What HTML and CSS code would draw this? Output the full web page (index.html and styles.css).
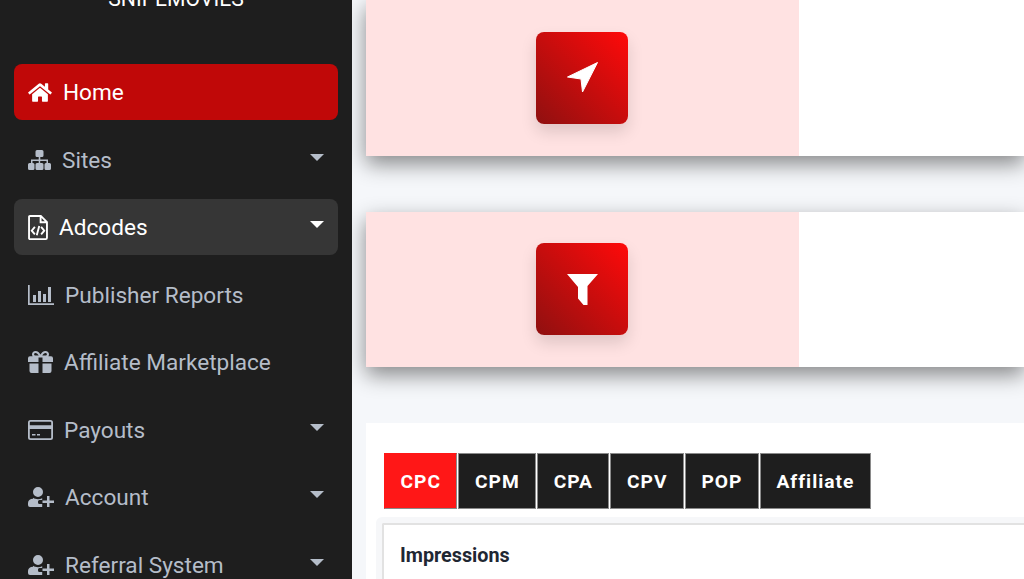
FILE: index.html
```html
<!DOCTYPE html>
<html lang="en">
<head>
    <meta charset="UTF-8">
    <meta name="viewport" content="width=device-width, initial-scale=1.0">
    <title>Snipemovies Dashboard</title>
    <link rel="stylesheet" href="styles.css">
</head>
<body>
    <div class="layout">
        <aside class="sidebar">
            <div class="brand">SNIPEMOVIES</div>
            <nav class="menu">
                <a class="menu-item active">
                    <svg class="ic ic-home" viewBox="0 0 576 512"><path fill="currentColor" d="M280.37 148.26L96 300.11V464a16 16 0 0 0 16 16l112.06-.29a16 16 0 0 0 15.92-16V368a16 16 0 0 1 16-16h64a16 16 0 0 1 16 16v95.64a16 16 0 0 0 16 16.05L464 480a16 16 0 0 0 16-16V300L295.67 148.26a12.19 12.19 0 0 0-15.3 0zM571.6 251.47L488 182.56V44.05a12 12 0 0 0-12-12h-56a12 12 0 0 0-12 12v72.61L318.47 43a48 48 0 0 0-61 0L4.34 251.47a12 12 0 0 0-1.6 16.9l25.5 31A12 12 0 0 0 45.15 301l235.22-193.74a12.19 12.19 0 0 1 15.3 0L530.9 301a12 12 0 0 0 16.9-1.6l25.5-31a12 12 0 0 0-1.7-16.93z"/></svg>
                    <span>Home</span>
                </a>
                <a class="menu-item">
                    <svg class="ic ic-sites" viewBox="0 0 23 20"><path fill="currentColor" d="M9 0h5a1.500 1.500 0 0 1 1.500 1.500v4A1.500 1.500 0 0 1 14 7h-1.700v2.500H20V13h1.500a1.500 1.500 0 0 1 1.500 1.500v4a1.500 1.500 0 0 1-1.500 1.500h-3.500a1.500 1.500 0 0 1-1.500-1.500v-4a1.500 1.500 0 0 1 1.500-1.500h.5v-2h-6.300v2H14a1.500 1.500 0 0 1 1.500 1.500v4A1.500 1.500 0 0 1 14 20H9a1.500 1.500 0 0 1-1.500-1.500v-4A1.500 1.500 0 0 1 9 13h1.700v-2H4.500v2H5a1.500 1.500 0 0 1 1.500 1.500v4A1.500 1.500 0 0 1 5 20H1.500A1.500 1.500 0 0 1 0 18.500v-4A1.500 1.500 0 0 1 1.500 13H3V9.500h7.700V7H9a1.500 1.500 0 0 1-1.500-1.500v-4A1.500 1.500 0 0 1 9 0z"/></svg>
                    <span>Sites</span>
                    <i class="caret"></i>
                </a>
                <a class="menu-item open">
                    <svg class="ic ic-code" viewBox="0 0 19 24"><path fill="none" stroke="currentColor" stroke-width="1.800" d="M1.800.9h10.400l5.900 5.900v15.100a1.200 1.200 0 0 1-1.200 1.200H1.800a.9.900 0 0 1-.9-.9V1.800a.9.900 0 0 1 .9-.9zM12 1v6h6"/><path fill="none" stroke="currentColor" stroke-width="1.800" d="M6.500 11.500l-3 3.500 3 3.500M12.500 11.500l3 3.500-3 3.500M10.700 10.500l-2.400 9"/></svg>
                    <span>Adcodes</span>
                    <i class="caret"></i>
                </a>
                <a class="menu-item">
                    <svg class="ic ic-chart" viewBox="0 0 26 20"><path fill="currentColor" d="M0 0h1.700v18.300H26V20H0zM5 10h3v7H5zM10 6h3v11h-3zM15 9h3v8h-3zM20 2h3v15h-3z"/></svg>
                    <span>Publisher Reports</span>
                </a>
                <a class="menu-item">
                    <svg class="ic ic-gift" viewBox="0 0 25 22"><path fill="currentColor" d="M7.500 0c2.300 0 3.900 1.500 5 3.600C13.600 1.500 15.200 0 17.500 0 19.500 0 21 1.500 21 3.300c0 .8-.2 1.400-.6 1.900H23a2 2 0 0 1 2 2V11H14.500V6.500h-4V11H0V7.200a2 2 0 0 1 2-2h2.600A3 3 0 0 1 4 3.300C4 1.500 5.500 0 7.500 0zm0 2C6.700 2 6.100 2.600 6.100 3.300s.6 1.300 1.400 1.300h3.200C9.800 3 8.800 2 7.500 2zm10 0c-1.300 0-2.300 1-3.200 2.600h3.200c.8 0 1.400-.6 1.400-1.300S18.300 2 17.500 2zM1.500 12.500h9V22h-7a2 2 0 0 1-2-2zm13 0h9V20a2 2 0 0 1-2 2h-7z"/></svg>
                    <span>Affiliate Marketplace</span>
                </a>
                <a class="menu-item">
                    <svg class="ic ic-card" viewBox="0 0 25 20"><path fill="currentColor" fill-rule="evenodd" d="M2.500 0h20A2.500 2.500 0 0 1 25 2.500v15a2.500 2.500 0 0 1-2.500 2.500h-20A2.500 2.500 0 0 1 0 17.500v-15A2.500 2.500 0 0 1 2.500 0zM1.800 2.500v2.800h21.400V2.500a.7.7 0 0 0-.7-.7h-20a.7.7 0 0 0-.7.7zm0 6.500v8.500c0 .4.300.7.700.7h20a.7.7 0 0 0 .7-.7V9zM4 14h3.500v1.500H4zM9 14h3v1.500H9z"/></svg>
                    <span>Payouts</span>
                    <i class="caret"></i>
                </a>
                <a class="menu-item">
                    <svg class="ic ic-user" viewBox="0 0 26 20"><path fill="currentColor" d="M10 0a5 5 0 1 1 0 10 5 5 0 0 1 0-10zM5 10.800c1.400 1 3.100 1.400 5 1.400 1.500 0 3-.4 4.200-1V13h-2.700a1.500 1.500 0 0 0-1.500 1.500v1a1.500 1.500 0 0 0 1.500 1.500h2.700v3H2a2 2 0 0 1-2-2v-2c0-2.500 2-4.200 5-4.200zM19 9h2.500v4.500H26V16h-4.500v4H19v-4h-4.500v-2.500H19z"/></svg>
                    <span>Account</span>
                    <i class="caret"></i>
                </a>
                <a class="menu-item">
                    <svg class="ic ic-user" viewBox="0 0 26 20"><path fill="currentColor" d="M10 0a5 5 0 1 1 0 10 5 5 0 0 1 0-10zM5 10.800c1.400 1 3.100 1.400 5 1.400 1.500 0 3-.4 4.200-1V13h-2.700a1.500 1.500 0 0 0-1.500 1.500v1a1.500 1.500 0 0 0 1.500 1.500h2.700v3H2a2 2 0 0 1-2-2v-2c0-2.500 2-4.200 5-4.200zM19 9h2.500v4.500H26V16h-4.500v4H19v-4h-4.500v-2.500H19z"/></svg>
                    <span>Referral System</span>
                    <i class="caret"></i>
                </a>
            </nav>
        </aside>

        <main class="main">
            <section class="stat-card">
                <div class="stat-side">
                    <div class="stat-icon">
                        <svg class="glyph" viewBox="0 0 31 31"><path fill="currentColor" stroke="currentColor" stroke-width="1" stroke-linejoin="round" d="M30.500.5L15.500 30 14 17 .5 15z"/></svg>
                    </div>
                </div>
            </section>

            <section class="stat-card">
                <div class="stat-side">
                    <div class="stat-icon">
                        <svg class="glyph" viewBox="0 0 31 31"><path fill="currentColor" d="M0 0h31L20.500 12v19h-4L11 24.500V13z"/></svg>
                    </div>
                </div>
            </section>

            <section class="panel">
                <div class="tabs">
                    <div class="tab active">CPC</div>
                    <div class="tab">CPM</div>
                    <div class="tab">CPA</div>
                    <div class="tab">CPV</div>
                    <div class="tab">POP</div>
                    <div class="tab">Affiliate</div>
                </div>
                <div class="rates">
                    <h5>Impressions</h5>
                </div>
            </section>
        </main>
    </div>
</body>
</html>
```

FILE: styles.css
```css
:root {
    --dark: #1e1e1e;
    --red: #c00808;
    --muted: #b5bdc9;
    --page: #f5f7fa;
}

html, body {
    margin: 0;
    height: 100%;
    overflow: hidden;
}

body {
    font-family: "Roboto", sans-serif;
    background: var(--page);
}

.layout {
    display: flex;
    height: 579px;
    overflow: hidden;
}

.sidebar {
    width: 352px;
    flex-shrink: 0;
    background: var(--dark);
    position: relative;
    z-index: 2;
    padding: 0 14px;
    box-sizing: border-box;
}

.brand {
    height: 79px;
    margin-top: -15px;
    line-height: 28px;
    text-align: center;
    color: white;
    font-size: 21.2px;
}

.menu {
    display: flex;
    flex-direction: column;
    gap: 11.5px;
}

.menu-item {
    display: flex;
    align-items: center;
    gap: 11px;
    height: 56px;
    flex-shrink: 0;
    padding: 0 14px;
    border-radius: 8px;
    color: var(--muted);
    font-size: 22.6px;
}

.menu-item span {
    padding-top: 1px;
}

.menu-item.active {
    background: var(--red);
    color: white;
}

.menu-item.open {
    background: #363636;
    color: white;
}

.ic {
    display: block;
    flex-shrink: 0;
}

.ic-home { width: 24px; height: 21px; }
.ic-sites { width: 23px; height: 20px; }
.ic-code { width: 20px; height: 25px; }
.ic-chart { width: 26px; height: 20px; }
.ic-gift { width: 25px; height: 22px; }
.ic-card { width: 25px; height: 20px; }
.ic-user { width: 26px; height: 20px; }

.caret {
    margin-left: auto;
    margin-bottom: 5px;
    width: 0;
    height: 0;
    border-left: 7px solid transparent;
    border-right: 7px solid transparent;
    border-top: 7px solid currentColor;
}

.main {
    flex: 1;
    min-width: 0;
    display: flex;
    flex-direction: column;
    gap: 56px;
    padding-left: 14px;
}

.stat-card {
    flex-shrink: 0;
    height: 155.5px;
    background: white;
    box-shadow: 0 8px 20px rgba(0, 0, 0, 0.45);
    display: flex;
}

.stat-side {
    width: 433px;
    box-sizing: border-box;
    padding-right: 1px;
    background: #ffe2e2;
    display: flex;
    align-items: center;
    justify-content: center;
}

.stat-icon {
    width: 92px;
    height: 92px;
    border-radius: 8px;
    background: linear-gradient(45deg, #8f1010, #ff0a0a);
    box-shadow: 0 8px 16px rgba(0, 0, 0, 0.13);
    color: white;
    display: flex;
    align-items: center;
    justify-content: center;
}

.glyph {
    width: 31px;
    height: 31px;
    display: block;
}

.panel {
    flex: 1;
    background: white;
    padding: 30px 0 0 16px;
}

.tabs {
    display: flex;
    gap: 1px;
    margin-left: 2px;
}

.tab {
    height: 56px;
    box-sizing: border-box;
    padding: 0 15.500px;
    display: flex;
    align-items: center;
    background: var(--dark);
    border: 1px solid #8a8a8a;
    color: white;
    font-size: 19.2px;
    font-weight: 700;
    letter-spacing: 1px;
}

.tab.active {
    background: #ff1717;
    border-color: #ff1717 #8a8a8a #8a8a8a #ff1717;
}

.rates {
    margin-top: 14px;
    padding: 16px;
    border: solid #e2e2e2;
    border-width: 2px 0 0 2px;
    box-shadow: 0 0 0 6px #f6f7f9;
    border-radius: 2px 0 0 0;
    height: 100px;
}

.rates h5 {
    margin: 3px 0 0;
    font-size: 19.8px;
    font-weight: 700;
    color: #1f2733;
}
```
